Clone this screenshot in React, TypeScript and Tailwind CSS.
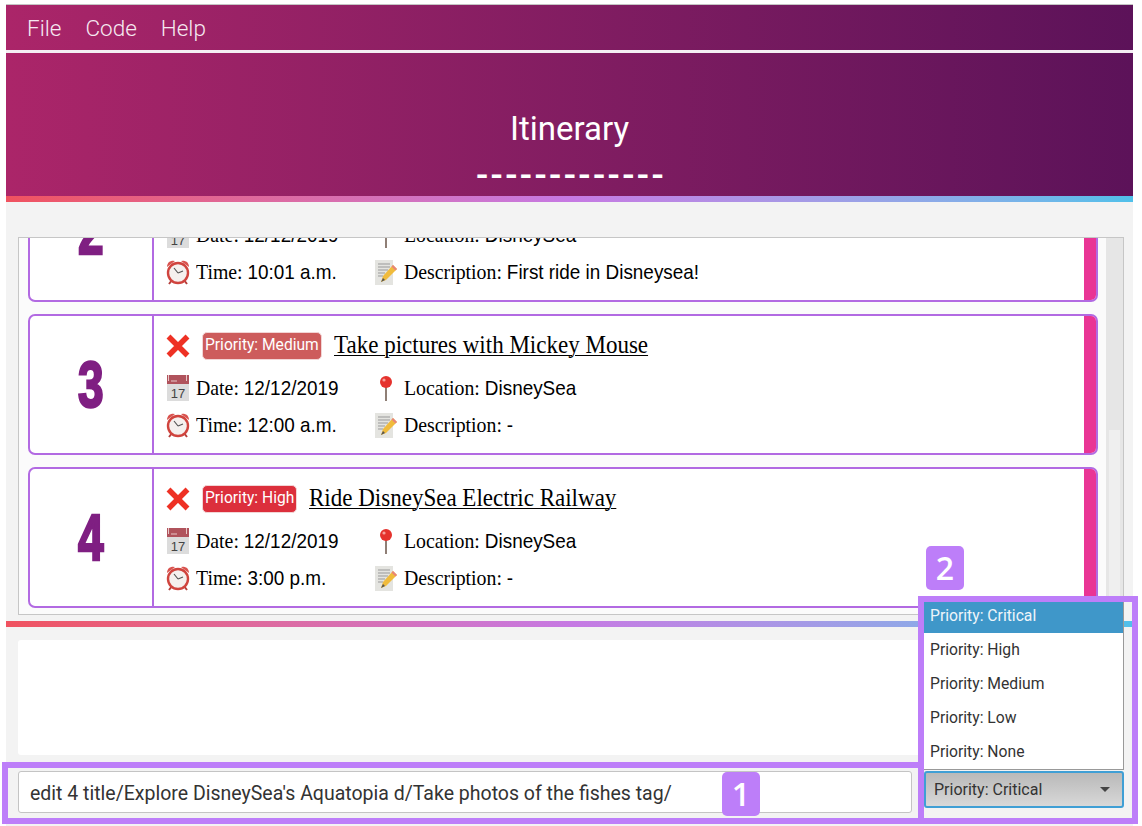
import type { ReactNode } from "react";

const serif = "font-['Liberation_Serif',serif]";

function Cross() {
  return (
    <svg width="24" height="24" viewBox="0 0 24 24" className="shrink-0 -ml-[1px]">
      <path d="M2.5 2.5 L21.5 21.5 M21.5 2.5 L2.5 21.5" stroke="#ee3124" strokeWidth="5.5" />
    </svg>
  );
}

function CalendarIcon() {
  return (
    <svg width="22" height="26" viewBox="0 0 22 26" className="shrink-0">
      <rect x="0" y="0" width="22" height="26" fill="#dcdcdc" />
      <rect x="0" y="0" width="22" height="9" fill="#b0535c" />
      <rect x="1" y="0" width="1" height="6" fill="#e8c8c8" />
      <rect x="19" y="0" width="1" height="6" fill="#e8c8c8" />
      <path d="M4 6 H10" stroke="#e8c8c8" strokeWidth="1" />
      <text x="11" y="23" textAnchor="middle" fontSize="13" fill="#444" fontFamily="Liberation Sans">17</text>
    </svg>
  );
}

function ClockIcon() {
  return (
    <svg width="24" height="26" viewBox="0 0 24 26" className="shrink-0 -mx-[1px]">
      <path d="M1 8 A6 6 0 0 1 9 2 Z M23 8 A6 6 0 0 0 15 2 Z" fill="#d9534f" />
      <path d="M6 21 L3 25 M18 21 L21 25" stroke="#b5403c" strokeWidth="2" />
      <circle cx="12" cy="14" r="10" fill="#f5f0ee" stroke="#d0443e" strokeWidth="2.4" />
      <path d="M12 14 L8 9 M12 14 L17 12" stroke="#555" strokeWidth="1.2" />
    </svg>
  );
}

function MemoIcon() {
  return (
    <svg width="22" height="26" viewBox="0 0 22 26" className="shrink-0">
      <rect x="0" y="1" width="18" height="25" fill="#e4e4e0" />
      <path d="M3 5 H15 M3 8 H15 M3 11 H13 M3 14 H10 M3 17 H8" stroke="#999" strokeWidth="1" />
      <path d="M6 23 L8 17 L18 6 L22 10 L11 21 Z" fill="#f0bb3c" />
      <path d="M18 6 L22 10 L20.5 11.5 L16.5 7.5 Z" fill="#e8837a" />
      <path d="M6 23 L8 19 L10 21 Z" fill="#555" />
    </svg>
  );
}

function PinIcon() {
  return (
    <svg width="22" height="26" viewBox="0 0 22 26" className="shrink-0">
      <rect x="10" y="12" width="2" height="14" fill="#8f7f76" />
      <circle cx="11" cy="7" r="6" fill="#e5322d" />
      <circle cx="9" cy="5" r="1.6" fill="#f6a09a" />
    </svg>
  );
}

function Field({ icon, label, value }: { icon: ReactNode; label: string; value: string }) {
  return (
    <div className="flex items-center gap-[7px] h-[26px]">
      {icon}
      <span className={`${serif} text-[22px] leading-[26px] text-black whitespace-nowrap origin-left scale-x-[0.9]`}>
        {label} <span className="font-['Liberation_Sans',sans-serif] text-[21px]">{value}</span>
      </span>
    </div>
  );
}

type Activity = {
  num: number;
  title?: string;
  priority?: string;
  badge?: string;
  date: string;
  time: string;
  desc: string;
};

const activities: Activity[] = [
  { num: 2, date: "12/12/2019", time: "10:01 a.m.", desc: "First ride in Disneysea!" },
  { num: 3, title: "Take pictures with Mickey Mouse", priority: "Priority: Medium", badge: "bg-[#cd5c5c]", date: "12/12/2019", time: "12:00 a.m.", desc: "-" },
  { num: 4, title: "Ride DisneySea Electric Railway", priority: "Priority: High", badge: "bg-[#dc2f3c]", date: "12/12/2019", time: "3:00 p.m.", desc: "-" },
];

function Card({ a, first }: { a: Activity; first?: boolean }) {
  return (
    <div className={`flex h-[141px] shrink-0 rounded-[7px] border-2 border-[#b26ae2] bg-white overflow-hidden ${first ? "-mt-[77px]" : ""}`}>
      <div className="w-[124px] shrink-0 border-r-2 border-[#b26ae2] flex items-center justify-center">
        <span className="font-['Liberation_Sans',sans-serif] font-bold text-[64px] leading-none text-[#7f1f82] scale-x-[0.72] [-webkit-text-stroke:2.5px_#7f1f82]">
          {a.num}
        </span>
      </div>
      <div className="flex-1 min-w-0 flex flex-col pl-[13px] pt-[15px]">
        <div className="flex items-center h-[29px]">
          <Cross />
          {a.title && (
            <>
              <span className={`${a.badge} ml-[12px] rounded-[5px] px-[2px] h-[28px] flex items-center text-white text-[15.6px] font-['Roboto',sans-serif] border border-[#f2d5d5] whitespace-nowrap`}>
                {a.priority}
              </span>
              <span className={`${serif} ml-[12px] mb-[2px] text-[26px] leading-[30px] underline underline-offset-[2px] decoration-1 text-black whitespace-nowrap origin-left scale-x-[0.885]`}>
                {a.title}
              </span>
            </>
          )}
        </div>
        <div className="flex flex-col gap-[11px] mt-[15px]">
          <div className="flex">
            <div className="w-[208px]">
              <Field icon={<CalendarIcon />} label="Date:" value={a.date} />
            </div>
            <Field icon={<PinIcon />} label="Location:" value="DisneySea" />
          </div>
          <div className="flex">
            <div className="w-[208px]">
              <Field icon={<ClockIcon />} label="Time:" value={a.time} />
            </div>
            <Field icon={<MemoIcon />} label="Description:" value={a.desc} />
          </div>
        </div>
      </div>
      <div className="w-[12px] shrink-0 bg-[#e93595]" />
    </div>
  );
}

function Rainbow() {
  return <div className="h-[6px] shrink-0 bg-gradient-to-r from-[#f0525f] via-[#c679e3] to-[#4fc0ea]" />;
}

const options = ["Priority: High", "Priority: Medium", "Priority: Low", "Priority: None"];

function PriorityPicker() {
  return (
    <div className="absolute left-[918px] top-[596px] w-[220px] h-[228px] border-[6px] border-[#bd7ef9] font-['Roboto',sans-serif] text-[15.7px]">
      <div className="w-[200px] h-[168px] bg-white border-b border-r border-[#999]">
        <div className="h-[31px] bg-[#3f97c9] text-[#eef5fa] flex items-center pl-[6px] pb-[4px]">Priority: Critical</div>
        {options.map((o) => (
          <div key={o} className="h-[34px] flex items-center pl-[6px] text-[#333]">
            {o}
          </div>
        ))}
      </div>
      <div className="mt-[1px] w-[200px] h-[37px] rounded-[3px] border-2 border-[#3f9fd5] bg-gradient-to-b from-[#b9b9b9] to-[#d8d8d8] flex items-center justify-between pl-[8px] pr-[12px] text-[16px] text-[#333]">
        Priority: Critical
        <span className="w-0 h-0 border-x-[5px] border-x-transparent border-t-[5px] border-t-[#444]" />
      </div>
    </div>
  );
}

function Tag({ n, className }: { n: number; className: string }) {
  return (
    <div className={`absolute w-[38px] h-[44px] rounded-[5px] bg-[#bd7ef9] text-white text-[32px] font-['Open_Sans',sans-serif] font-semibold flex items-center justify-center ${className}`}>
      {n}
    </div>
  );
}

export default function App() {
  return (
    <div className="relative w-[1142px] h-[826px] overflow-hidden bg-white pt-[4px] font-['Roboto',sans-serif]">
      <div className="ml-[6px] w-[1127px] h-[822px] flex flex-col bg-[#f3f3f3] border-t border-t-[#c4c4c4]">
        <div className="bg-gradient-to-r from-[#ab2569] to-[#5c1259]">
          <div className="h-[45px] flex items-center gap-[24px] pl-[21px] pt-[2px] text-[22.5px] font-light text-[#f6e9f1]">
            <span>File</span>
            <span>Code</span>
            <span>Help</span>
          </div>
          <div className="h-[3px] bg-[#f4eef3]" />
          <div className="h-[143px] flex flex-col items-center pt-[53px] text-white">
            <div className="text-[33px] leading-[46px]">Itinerary</div>
            <div className="text-[36px] leading-[20px] font-medium tracking-[2.4px] mt-[14px] ml-[3px]">-------------</div>
          </div>
        </div>
        <Rainbow />
        <div className="pt-[35px] pl-[12px] pr-[9px]">
          <div className="h-[378px] border border-[#c6c6c6] bg-white flex">
            <div className="flex-1 min-w-0 flex flex-col gap-[12px] pl-[9px] pr-[8px] overflow-hidden bg-[#fbfbfb]">
              {activities.map((a, i) => (
                <Card key={a.num} a={a} first={i === 0} />
              ))}
            </div>
            <div className="w-[17px] shrink-0 bg-[#e6e6e6] flex flex-col">
              <div className="mt-[192px] flex-1 mx-[3px] bg-[#efefef]" />
            </div>
          </div>
        </div>
        <div className="mt-[6px]">
          <Rainbow />
        </div>
        <div className="mt-[13px] ml-[12px] h-[115px] w-[1106px] bg-white rounded-[3px]" />
        <div className="mt-[16px] ml-[12px] w-[894px] h-[42px] bg-white rounded-[3px] border border-[#c4c4c4] flex items-center pl-[11px] pt-[3px] text-[19.5px] font-['Roboto',sans-serif] text-[#333] whitespace-nowrap">
          edit 4 title/Explore DisneySea's Aquatopia d/Take photos of the fishes tag/
        </div>
      </div>
      <div className="absolute left-[2px] top-[762px] w-[922px] h-[62px] border-[6px] border-[#bd7ef9]" />
      <PriorityPicker />
      <Tag n={1} className="left-[722px] top-[772px]" />
      <Tag n={2} className="left-[926px] top-[546px]" />
    </div>
  );
}
